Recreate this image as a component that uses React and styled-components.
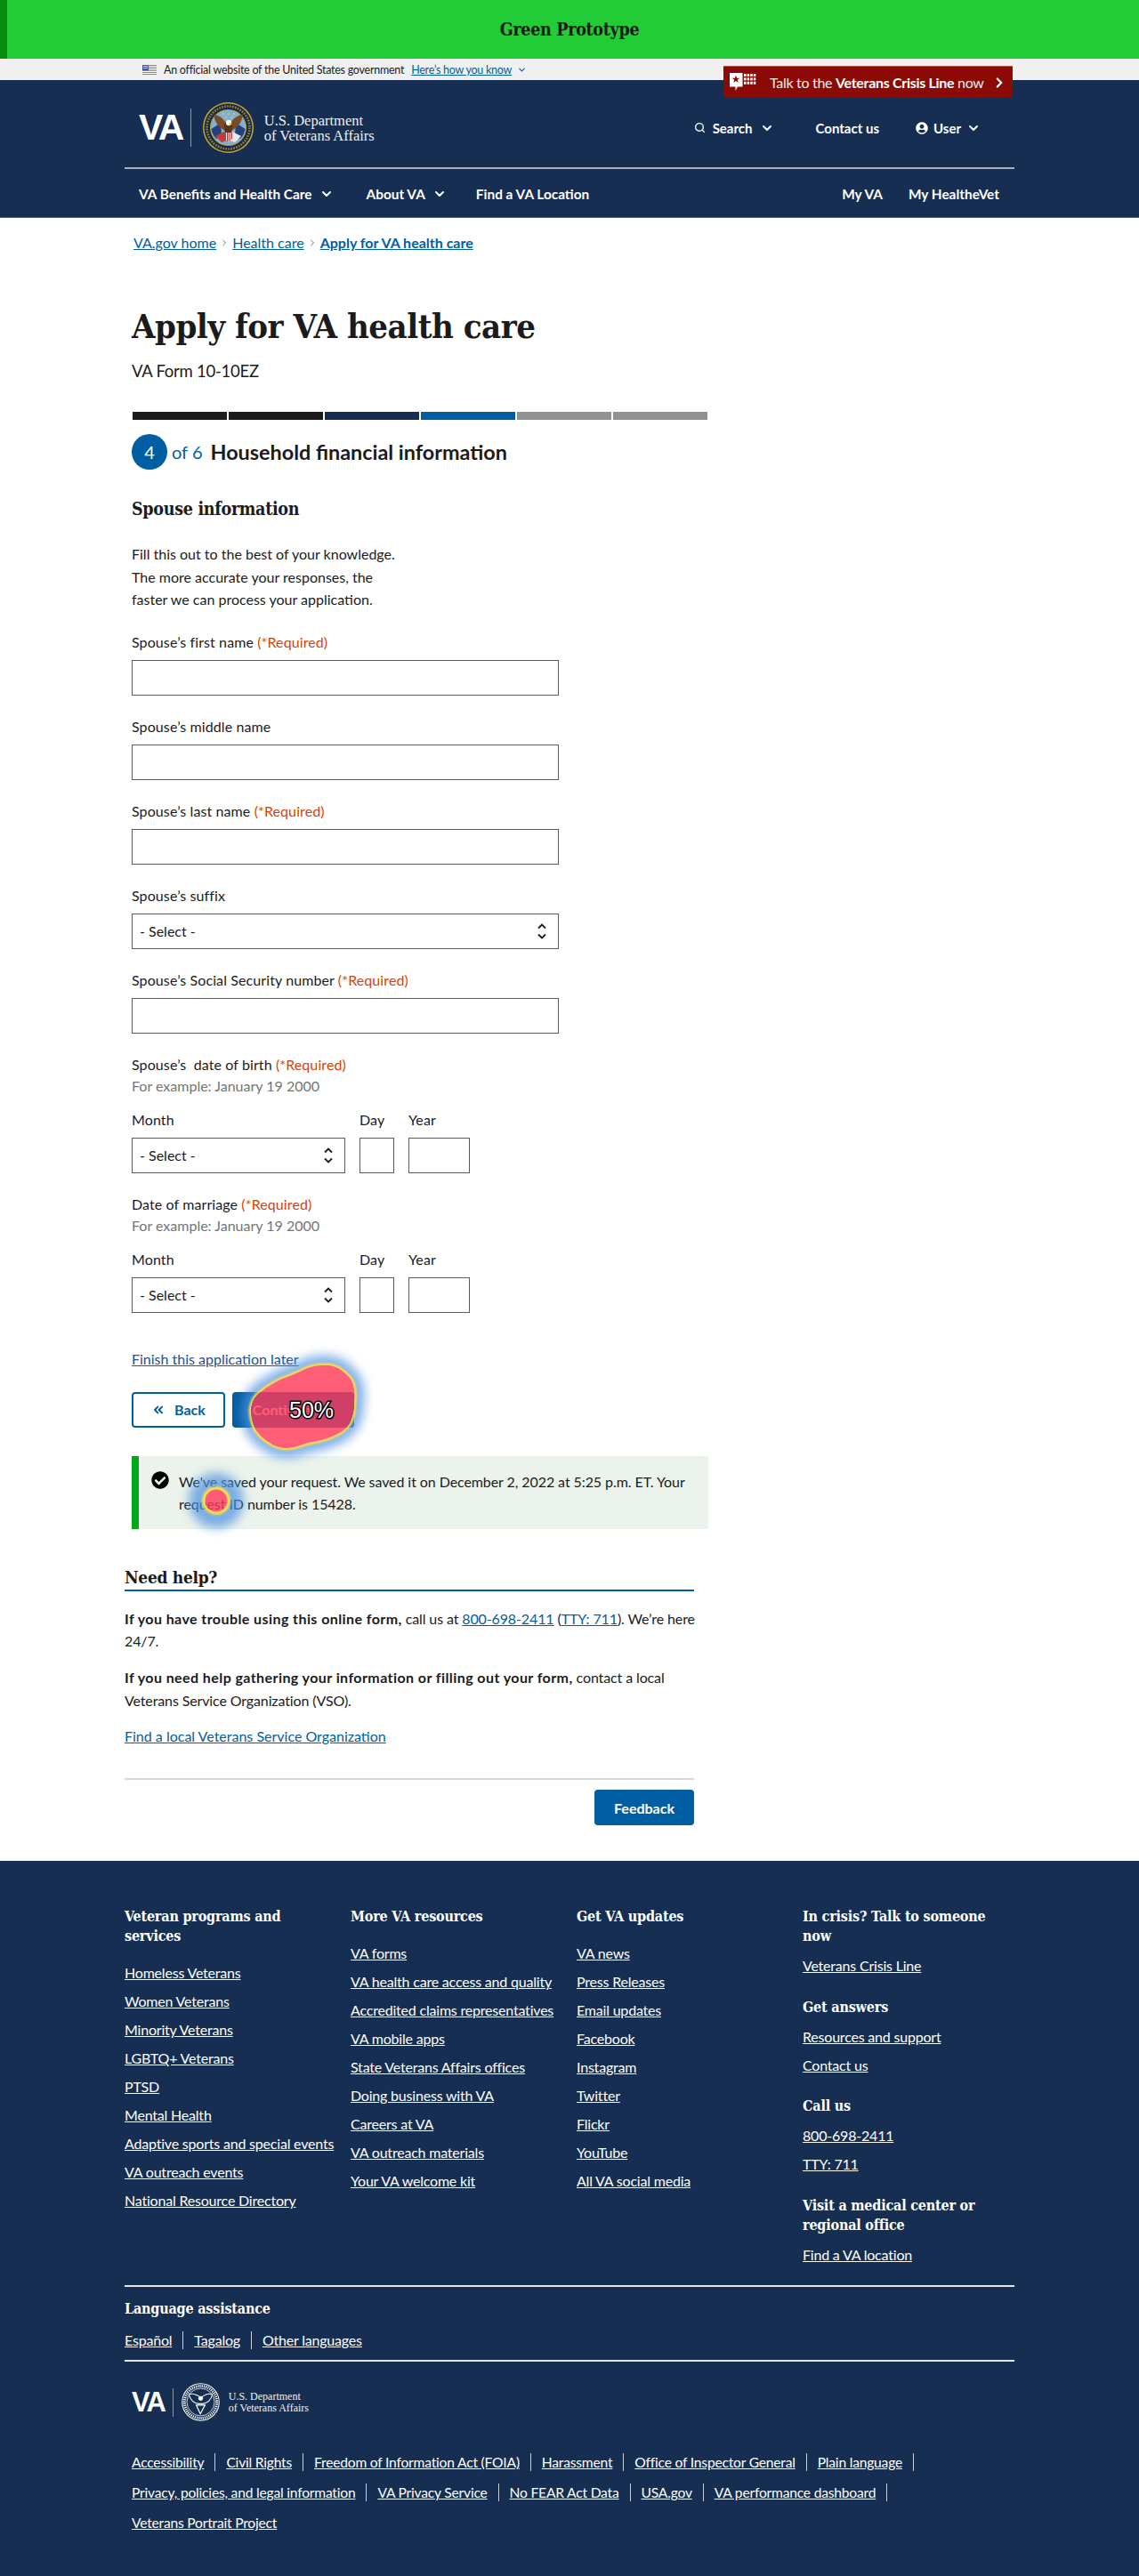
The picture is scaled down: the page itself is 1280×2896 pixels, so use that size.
import React from 'react'
import styled, { createGlobalStyle } from 'styled-components'
import { ChevronDown, ChevronRight, ChevronsLeft, ChevronsRight, Search } from 'lucide-react'
import { FaUserCircle, FaCheckCircle } from 'react-icons/fa'

const SANS = `'Lato', 'Noto Sans', sans-serif`
const SERIF = `'DejaVu Serif Condensed', 'DejaVu Serif', serif`
const NAVY = '#162e51'
const BLUE = '#005ea2'

const GlobalStyle = createGlobalStyle`
  * { box-sizing: border-box; }
  body {
    margin: 0;
    background: #fff;
    color: #1b1b1b;
    font-family: ${SANS};
    font-size: 16px;
  }
`

const Page = styled.div`
  position: relative;
  width: 1280px;
  min-height: 2896px;
  overflow: hidden;
`

// prototype banner
const PrototypeBar = styled.div`
  height: 66px;
  background: #22cc36;
  border-left: 8px solid #0a8a0f;
  padding-right: 8px;
  display: flex;
  align-items: center;
  justify-content: center;
  font-family: ${SERIF};
  font-weight: 700;
  font-size: 19.5px;
  letter-spacing: -0.3px;
  color: #1b1b1b;
`

const GovBanner = styled.div`
  height: 24px;
  background: #f0f0f0;
  padding-left: 160px;
  display: flex;
  align-items: center;
  font-size: 12.5px;
  letter-spacing: -0.25px;
  color: #1b1b1b;
`

const GovText = styled.span`
  margin: 0 8px;
`

const GovLink = styled.a`
  color: ${BLUE};
  text-decoration: underline;
  margin-right: 6px;
`

// header
const Header = styled.header`
  background: ${NAVY};
  height: 155px;
  border-bottom: 1px solid #4a5a78;
`

const HeaderInner = styled.div`
  width: 1000px;
  margin: 0 auto;
`

const TopRow = styled.div`
  height: 98px;
  padding: 25px 0 0 16px;
  display: flex;
  justify-content: space-between;
`

const LogoWrap = styled.div`
  display: flex;
  align-items: center;
  height: 57px;
  color: #fff;
`

const VaMark = styled.span`
  font-family: 'Liberation Sans', Arial, sans-serif;
  font-weight: 700;
  font-size: ${({ $small }) => ($small ? '31px' : '41px')};
  letter-spacing: ${({ $small }) => ($small ? '-2px' : '-2.6px')};
  color: #fff;
`

const LogoDivider = styled.span`
  width: 1px;
  height: ${({ $small }) => ($small ? '32px' : '43px')};
  background: #8a97ac;
  margin: ${({ $small }) => ($small ? '0 9px 0 9px' : '0 13px 0 9px')};
`

const DeptName = styled.span`
  font-family: 'Liberation Serif', serif;
  font-size: ${({ $small }) => ($small ? '12px' : '16.5px')};
  line-height: ${({ $small }) => ($small ? '13px' : '17px')};
  margin-left: ${({ $small }) => ($small ? '10px' : '12px')};
  color: #f0f0f0;
`

const UtilityNav = styled.div`
  display: flex;
  align-items: center;
  height: 57px;
  padding-right: 38px;
  color: #fff;
  font-weight: 700;
  font-size: 15px;
`

const UtilityItem = styled.span`
  display: flex;
  align-items: center;
  gap: ${({ $gap }) => $gap || 8}px;
  margin-left: ${({ $left }) => $left || 0}px;
`

const Rule = styled.div`
  height: 2px;
  background: #aeb0b5;
`

const MainNav = styled.nav`
  height: 55px;
  padding: 0 17px 0 16px;
  display: flex;
  align-items: center;
  color: #fff;
  font-weight: 700;
  font-size: 15.4px;
`

const NavItem = styled.span`
  display: flex;
  align-items: center;
  gap: 8px;
  margin-right: ${({ $right }) => $right || 0}px;
`

const NavSpacer = styled.span`
  flex: 1;
`

const CrisisButton = styled.a`
  position: absolute;
  left: 813px;
  top: 74px;
  width: 325px;
  height: 36px;
  background: #8b0a03;
  border-top: 1px solid #c0504a;
  border-radius: 0 0 3px 3px;
  padding: 0 6px 0 7px;
  display: flex;
  align-items: center;
  color: #fff;
  font-size: 16px;
`

const CrisisText = styled.span`
  margin: 0 auto 0 15px;
  color: #f0f0f0;
  letter-spacing: -0.3px;
  b { color: #fff; }
`

// main form
const Breadcrumbs = styled.nav`
  padding: 16px 0 0 150px;
  display: flex;
  align-items: center;
  line-height: 24px;
  color: #71767a;
`

const Crumb = styled.a`
  color: ${BLUE};
  text-decoration: underline;
  font-weight: ${({ $current }) => ($current ? 700 : 400)};
`

const CrumbArrow = styled(ChevronRight)`
  margin: 0 3px;
`

const FormColumn = styled.main`
  margin-left: 148px;
  width: 648px;
`

const Title = styled.h1`
  margin: 58px 0 0;
  font-family: ${SERIF};
  font-weight: 700;
  font-size: 38px;
  line-height: 48px;
  letter-spacing: -0.5px;
`

const FormNumber = styled.div`
  margin-top: 12px;
  font-size: 18.5px;
  letter-spacing: -0.25px;
  line-height: 28px;
`

const StepBar = styled.div`
  margin: 32px 0 0 1px;
  display: grid;
  grid-template-columns: repeat(6, 106px);
  gap: 2px;
`

const StepSegment = styled.div`
  height: 9px;
  background: ${({ $color }) => $color};
`

const StepRow = styled.div`
  margin-top: 16px;
  height: 40px;
  display: flex;
  align-items: center;
`

const StepCircle = styled.div`
  width: 40px;
  height: 40px;
  border-radius: 50%;
  background: ${BLUE};
  color: #fff;
  font-size: 20px;
  display: flex;
  align-items: center;
  justify-content: center;
`

const StepCount = styled.span`
  margin-left: 5px;
  font-size: 20px;
  color: ${BLUE};
`

const StepTitle = styled.span`
  margin-left: 9px;
  font-size: 23.4px;
  font-weight: 700;
`

const SectionTitle = styled.h2`
  margin: 30px 0 0;
  font-family: ${SERIF};
  font-weight: 700;
  font-size: 19.5px;
  line-height: 30px;
  letter-spacing: -0.3px;
`

const Intro = styled.p`
  margin: 22px 0 0;
  line-height: 25.6px;
`

const Field = styled.div`
  margin-top: 23px;
`

const Label = styled.label`
  display: block;
  line-height: 24px;
  letter-spacing: 0.1px;
  margin-bottom: ${({ $tight }) => ($tight ? 0 : '8px')};
`

const Required = styled.span`
  color: #d54309;
`

const Hint = styled.div`
  color: #757575;
  line-height: 23px;
  margin-bottom: 15px;
`

const TextInput = styled.input`
  display: block;
  width: ${({ $width }) => $width || 480}px;
  height: 40px;
  background: #fff;
  border: 1px solid #5c5c5c;
  border-radius: 0;
  padding: 0 8px;
`

const SelectBox = styled.div`
  width: ${({ $width }) => $width || 480}px;
  height: 40px;
  border: 1px solid #5c5c5c;
  padding: 0 13px 0 8px;
  display: flex;
  align-items: center;
  justify-content: space-between;
`

const DateRow = styled.div`
  display: flex;
  gap: 16px;
`

const FinishLink = styled.a`
  display: block;
  margin-top: 40px;
  line-height: 24px;
  color: #264f8c;
  text-decoration: underline;
`

const ButtonRow = styled.div`
  margin-top: 25px;
  display: flex;
  gap: 8px;
`

const ActionButton = styled.button`
  height: 40px;
  width: ${({ $width }) => $width}px;
  border-radius: 4px;
  font-family: ${SANS};
  font-size: 16px;
  font-weight: 700;
  display: flex;
  align-items: center;
  justify-content: center;
  gap: 10px;
  background: ${({ $outline }) => ($outline ? '#fff' : BLUE)};
  color: ${({ $outline }) => ($outline ? BLUE : '#fff')};
  border: 2px solid ${BLUE};
`

const Alert = styled.div`
  margin-top: 32px;
  height: 82px;
  background: #ecf3ec;
  border-left: 8px solid #00a91c;
  padding: 16px 12px 0 14px;
  display: flex;
  gap: 11px;
  line-height: 25.6px;
  letter-spacing: -0.08px;
`

const AlertIcon = styled(FaCheckCircle)`
  flex: none;
  margin-top: 1px;
  font-size: 20px;
  color: #000;
`

const HelpSection = styled.section`
  margin: 40px 0 0 140px;
  width: 640px;
`

const HelpTitle = styled.h2`
  margin: 0;
  font-family: ${SERIF};
  font-weight: 700;
  font-size: 19px;
  line-height: 28px;
  letter-spacing: -0.3px;
  border-bottom: 2px solid ${BLUE};
`

const HelpText = styled.p`
  margin: ${({ $top }) => $top}px 0 0;
  line-height: 25.6px;
  letter-spacing: -0.12px;
  white-space: nowrap;
  b { letter-spacing: 0.42px; }
`

const Plain = styled.span``

const TextLink = styled.a`
  color: ${BLUE};
  text-decoration: underline;
`

const HelpLink = styled(TextLink)`
  display: block;
  margin-top: 16px;
  line-height: 24px;
`

const HelpRule = styled.div`
  margin-top: 35px;
  height: 2px;
  background: #d6d7d9;
`

const FeedbackRow = styled.div`
  margin-top: 11px;
  display: flex;
  justify-content: flex-end;
`

// footer
const Footer = styled.footer`
  margin-top: 40px;
  background: ${NAVY};
  padding-bottom: 48px;
  color: #fff;
`

const FooterInner = styled.div`
  width: 1000px;
  margin: 0 auto;
  padding-top: 52px;
`

const FooterGrid = styled.div`
  display: grid;
  grid-template-columns: repeat(4, 254px);
`

const FooterHeading = styled.h3`
  margin: ${({ $top }) => $top || 0}px 0 0;
  font-family: ${SERIF};
  font-weight: 700;
  font-size: 16px;
  line-height: 22px;
  letter-spacing: -0.2px;
  color: #fff;
`

const FooterList = styled.div`
  margin-top: ${({ $top }) => $top}px;
  display: flex;
  flex-direction: column;
  align-items: flex-start;
  gap: 8px;
`

const FooterLink = styled.a`
  color: #fff;
  text-decoration: underline;
  line-height: 24px;
  letter-spacing: -0.2px;
  white-space: nowrap;
`

const LegalLink = styled(FooterLink)`
  font-size: 15.6px;
`

const FooterRule = styled.div`
  height: 2px;
  background: #e6e6e6;
  margin-top: ${({ $top }) => $top}px;
`

const LinkRow = styled.div`
  display: flex;
  align-items: center;
  height: 24px;
  margin-top: ${({ $top }) => $top || 0}px;
  padding-left: ${({ $indent }) => $indent || 0}px;
`

const RowItem = styled.span`
  display: flex;
  align-items: center;
  height: 20px;
  padding-right: 12px;
  margin-right: 12px;
  border-right: 1px solid ${({ $last }) => ($last ? 'transparent' : '#c9ced6')};
`

const FooterLogo = styled.div`
  margin: 24px 0 0 8px;
  height: 43px;
  display: flex;
  align-items: center;
`

// heatmap overlay
const HeatLayer = styled.svg`
  position: absolute;
  left: 0;
  top: 0;
  pointer-events: none;
`

const HeatLabel = styled.span`
  position: absolute;
  left: 325px;
  top: 1570px;
  font-family: 'Liberation Sans', Arial, sans-serif;
  font-size: 25px;
  line-height: 30px;
  color: #fff;
  -webkit-text-stroke: 3px #000;
  paint-order: stroke fill;
`

const FlagIcon = () => (
  <svg width="16" height="11" viewBox="0 0 16 11">
    <rect width="16" height="11" fill="#fff" />
    {[0, 2, 4, 6, 8, 10].map(y => (
      <rect key={y} y={y} width="16" height="1" fill="#e8634f" />
    ))}
    <rect width="7" height="6" fill="#4a4fb0" />
    <rect x="1" y="1" width="5" height="1" fill="#c9cdf0" />
    <rect x="1" y="3" width="5" height="1" fill="#c9cdf0" />
  </svg>
)

const UpDownArrows = () => (
  <svg width="10" height="18" viewBox="0 0 10 18" fill="none" stroke="#1b1b1b" strokeWidth="1.8">
    <path d="M1 5.5 L5 1.5 L9 5.5" />
    <path d="M1 12.5 L5 16.5 L9 12.5" />
  </svg>
)

const CrisisIcon = () => (
  <svg width="30" height="21" viewBox="0 0 30 21">
    <path d="M0 0H14.5V15.5H9L6.5 20V15.5H0Z" fill="#fff" />
    <path d="M7 2.8l1.1 3h3.2l-2.6 2 1 3.2L7 9.1l-2.7 1.9 1-3.2-2.6-2h3.2z" fill="#8b0a03" />
    {[0, 1, 2].map(r =>
      [0, 1, 2, 3].map(c => (
        <rect key={`${r}-${c}`} x={16 + c * 3.6} y={1 + r * 4.4} width="2.5" height="3" fill="#fff" />
      ))
    )}
  </svg>
)

// the round VA seal, colour for the header and white line for the footer
const Seal = ({ size, mono }) => (
  <svg width={size} height={size} viewBox="0 0 57 57">
    {mono ? (
      <g fill="none" stroke="#fff">
        <circle cx="28.5" cy="28.5" r="27.5" strokeWidth="1.4" />
        <circle cx="28.5" cy="28.5" r="24" strokeWidth="4" strokeDasharray="1.5 1.5" />
        <circle cx="28.5" cy="28.5" r="20.5" strokeWidth="1" />
        <path d="M28 21 C22 17 16 15 11 17 C13 25 18 30 26 31 L31 31 C39 30 44 25 46 17 C41 15 35 17 30 21Z" strokeWidth="1.4" />
        <path d="M22 33 L28 46 L35 33Z" strokeWidth="1.6" />
        <circle cx="28.5" cy="23" r="3" fill="#fff" />
      </g>
    ) : (
      <g>
        <circle cx="28.5" cy="28.5" r="28.5" fill="#c9a227" />
        <circle cx="28.5" cy="28.5" r="27" fill="#142a4d" />
        <circle cx="28.5" cy="28.5" r="24" fill="none" stroke="#c9a227" strokeWidth="2.6" strokeDasharray="1.6 1.4" opacity="0.75" />
        <circle cx="28.5" cy="28.5" r="20.5" fill="#c9a227" />
        <circle cx="28.5" cy="28.5" r="19.5" fill="#7fb0d6" />
        <path d="M9.5 30 L20 23 L21 38 L15 41 C12 38 10 34 9.5 30Z" fill="#27407a" />
        <path d="M47.5 30 L37 23 L36 38 L42 41 C45 38 47 34 47.5 30Z" fill="#27407a" />
        <path d="M14 38 L24 33 L27 43 L21 45Z" fill="#c23a3a" />
        <path d="M43 38 L33 33 L30 43 L36 45Z" fill="#e8e8e8" />
        <path d="M27 25 C23 18 18 14 12 14 C13 21 17 28 25 32Z" fill="#7a4a22" />
        <path d="M30 25 C34 18 39 14 45 14 C44 21 40 28 32 32Z" fill="#7a4a22" />
        <path d="M24 27 C24 23 26 21 29 21 C32 21 34 23 33 27 L32 36 L25 36Z" fill="#5a3418" />
        <circle cx="29" cy="23" r="3.2" fill="#f5f5f5" />
        <path d="M30 23 L33.5 24.5 L30 25.5Z" fill="#e0b030" />
        <path d="M24.5 34 H33 V41 L28.7 45 L24.5 41Z" fill="#c23a3a" />
        <path d="M26.5 34 V43 M29 34 V45 M31.2 34 V43" stroke="#fff" strokeWidth="0.9" />
        <g fill="#e5c340">
          <circle cx="23" cy="13" r="1" />
          <circle cx="29" cy="13" r="1" />
          <circle cx="35" cy="13" r="1" />
          <circle cx="26" cy="17" r="1" />
          <circle cx="32" cy="17" r="1" />
        </g>
      </g>
    )}
  </svg>
)

const BLOB = 'M282 1585 C283 1575 287 1569 293 1565 C301 1558 309 1554 317 1550 C325 1547 331 1545 337 1542 C345 1538 352 1535 360 1535 C370 1534 378 1536 383 1540 C391 1546 396 1551 397 1557 C399 1564 399 1571 398 1577 C398 1586 396 1594 393 1600 C388 1608 381 1612 373 1615 C365 1619 356 1620 347 1622 C339 1624 331 1628 323 1628 C315 1628 309 1626 303 1622 C296 1618 291 1613 287 1607 C284 1600 282 1593 282 1585Z'

// blue and yellow are kept outside the red core so the page shows through it
const Heatmap = () => (
  <HeatLayer width="1280" height="2896" viewBox="0 0 1280 2896">
    <defs>
      <filter id="soft" x="-50%" y="-50%" width="200%" height="200%">
        <feGaussianBlur stdDeviation="6" />
      </filter>
      <filter id="softer" x="-50%" y="-50%" width="200%" height="200%">
        <feGaussianBlur stdDeviation="1.2" />
      </filter>
      <mask id="outside" maskUnits="userSpaceOnUse" x="0" y="0" width="1280" height="2896">
        <rect width="1280" height="2896" fill="#fff" />
        <path d={BLOB} fill="#000" />
        <circle cx="243" cy="1687" r="12.5" fill="#000" />
      </mask>
    </defs>
    <g mask="url(#outside)">
      <g filter="url(#soft)" opacity="0.72">
        <path d={BLOB} fill="#4f92e0" stroke="#4f92e0" strokeWidth="22" />
        <circle cx="243" cy="1687" r="31" fill="#4f92e0" />
      </g>
      <g filter="url(#softer)">
        <path d={BLOB} fill="#f7de4a" stroke="#f7de4a" strokeWidth="5" />
        <circle cx="243" cy="1687" r="16" fill="#f7de4a" />
      </g>
    </g>
    <g fill="rgb(255,57,88)" fillOpacity="0.81">
      <path d={BLOB} />
      <circle cx="243" cy="1687" r="12.5" />
    </g>
  </HeatLayer>
)

const footerColumns = [
  {
    heading: <>Veteran programs and<br />services</>,
    links: ['Homeless Veterans', 'Women Veterans', 'Minority Veterans', 'LGBTQ+ Veterans', 'PTSD', 'Mental Health', 'Adaptive sports and special events', 'VA outreach events', 'National Resource Directory'],
  },
  {
    heading: 'More VA resources',
    links: ['VA forms', 'VA health care access and quality', 'Accredited claims representatives', 'VA mobile apps', 'State Veterans Affairs offices', 'Doing business with VA', 'Careers at VA', 'VA outreach materials', 'Your VA welcome kit'],
  },
  {
    heading: 'Get VA updates',
    links: ['VA news', 'Press Releases', 'Email updates', 'Facebook', 'Instagram', 'Twitter', 'Flickr', 'YouTube', 'All VA social media'],
  },
]

const contactGroups = [
  { heading: <>In crisis? Talk to someone<br />now</>, links: ['Veterans Crisis Line'], top: 0 },
  { heading: 'Get answers', links: ['Resources and support', 'Contact us'], top: 24 },
  { heading: 'Call us', links: ['800-698-2411', 'TTY: 711'], top: 23 },
  { heading: <>Visit a medical center or<br />regional office</>, links: ['Find a VA location'], top: 24 },
]

const legalRows = [
  ['Accessibility', 'Civil Rights', 'Freedom of Information Act (FOIA)', 'Harassment', 'Office of Inspector General', 'Plain language'],
  ['Privacy, policies, and legal information', 'VA Privacy Service', 'No FEAR Act Data', 'USA.gov', 'VA performance dashboard'],
]

const DateField = ({ label }) => (
  <Field>
    <Label $tight>{label} <Required>(*Required)</Required></Label>
    <Hint>For example: January 19 2000</Hint>
    <DateRow>
      <div>
        <Label>Month</Label>
        <SelectBox $width={240}>- Select - <UpDownArrows /></SelectBox>
      </div>
      <div>
        <Label>Day</Label>
        <TextInput $width={39} />
      </div>
      <div>
        <Label>Year</Label>
        <TextInput $width={69} />
      </div>
    </DateRow>
  </Field>
)

const TextField = ({ label, required }) => (
  <Field>
    <Label>{label} {required && <Required>(*Required)</Required>}</Label>
    <TextInput />
  </Field>
)

const App = () => (
  <Page>
    <GlobalStyle />
    <PrototypeBar>Green Prototype</PrototypeBar>
    <GovBanner>
      <FlagIcon />
      <GovText>An official website of the United States government</GovText>
      <GovLink>Here’s how you know</GovLink>
      <ChevronDown size={11} color={BLUE} strokeWidth={2.5} />
    </GovBanner>
    <CrisisButton>
      <CrisisIcon />
      <CrisisText>Talk to the <b>Veterans Crisis Line</b> now</CrisisText>
      <ChevronRight size={18} strokeWidth={3} />
    </CrisisButton>
    <Header>
      <HeaderInner>
        <TopRow>
          <LogoWrap>
            <VaMark>VA</VaMark>
            <LogoDivider />
            <Seal size={57} />
            <DeptName>U.S. Department<br />of Veterans Affairs</DeptName>
          </LogoWrap>
          <UtilityNav>
            <UtilityItem><Search size={13} strokeWidth={2.5} /> Search <ChevronDown size={16} strokeWidth={3} /></UtilityItem>
            <UtilityItem $left={47}>Contact us</UtilityItem>
            <UtilityItem $left={41} $gap={6}><FaUserCircle size={14} /> User <ChevronDown size={16} strokeWidth={3} /></UtilityItem>
          </UtilityNav>
        </TopRow>
        <Rule />
        <MainNav>
          <NavItem $right={37}>VA Benefits and Health Care <ChevronDown size={16} strokeWidth={3} /></NavItem>
          <NavItem $right={33}>About VA <ChevronDown size={16} strokeWidth={3} /></NavItem>
          <NavItem>Find a VA Location</NavItem>
          <NavSpacer />
          <NavItem $right={29}>My VA</NavItem>
          <NavItem>My HealtheVet</NavItem>
        </MainNav>
      </HeaderInner>
    </Header>

    <Breadcrumbs>
      <Crumb>VA.gov home</Crumb>
      <CrumbArrow size={12} />
      <Crumb>Health care</Crumb>
      <CrumbArrow size={12} />
      <Crumb $current>Apply for VA health care</Crumb>
    </Breadcrumbs>

    <FormColumn>
      <Title>Apply for VA health care</Title>
      <FormNumber>VA Form 10-10EZ</FormNumber>
      <StepBar>
        {['#1b1b1b', '#1b1b1b', NAVY, BLUE, '#919191', '#919191'].map((c, i) => (
          <StepSegment key={i} $color={c} />
        ))}
      </StepBar>
      <StepRow>
        <StepCircle>4</StepCircle>
        <StepCount>of 6</StepCount>
        <StepTitle>Household financial information</StepTitle>
      </StepRow>
      <SectionTitle>Spouse information</SectionTitle>
      <Intro>
        Fill this out to the best of your knowledge.<br />
        The more accurate your responses, the<br />
        faster we can process your application.
      </Intro>
      <TextField label="Spouse’s first name" required />
      <TextField label="Spouse’s middle name" />
      <TextField label="Spouse’s last name" required />
      <Field>
        <Label>Spouse’s suffix</Label>
        <SelectBox>- Select - <UpDownArrows /></SelectBox>
      </Field>
      <TextField label="Spouse’s Social Security number" required />
      <DateField label={'Spouse’s\u00a0 date of birth'} />
      <DateField label="Date of marriage" />
      <FinishLink>Finish this application later</FinishLink>
      <ButtonRow>
        <ActionButton $outline $width={105}><ChevronsLeft size={16} strokeWidth={3} /> Back</ActionButton>
        <ActionButton $width={137}>Continue <ChevronsRight size={16} strokeWidth={3} /></ActionButton>
      </ButtonRow>
      <Alert>
        <AlertIcon />
        <span>We've saved your request. We saved it on December 2, 2022 at 5:25 p.m. ET. Your request ID number is 15428.</span>
      </Alert>
    </FormColumn>

    <HelpSection>
      <HelpTitle>Need help?</HelpTitle>
      <HelpText $top={18}>
        <b>If you have trouble using this online form,</b>
        <Plain> call us at </Plain>
        <TextLink>800-698-2411</TextLink>
        <Plain> (</Plain>
        <TextLink>TTY: 711</TextLink>
        <Plain>). We’re here<br />24/7.</Plain>
      </HelpText>
      <HelpText $top={15}>
        <b>If you need help gathering your information or filling out your form,</b>
        <Plain> contact a local<br />Veterans Service Organization (VSO).</Plain>
      </HelpText>
      <HelpLink>Find a local Veterans Service Organization</HelpLink>
      <HelpRule />
      <FeedbackRow>
        <ActionButton $width={112}>Feedback</ActionButton>
      </FeedbackRow>
    </HelpSection>

    <Footer>
      <FooterInner>
        <FooterGrid>
          {footerColumns.map((col, i) => (
            <div key={i}>
              <FooterHeading>{col.heading}</FooterHeading>
              <FooterList $top={18}>
                {col.links.map(l => <FooterLink key={l}>{l}</FooterLink>)}
              </FooterList>
            </div>
          ))}
          <div>
            {contactGroups.map((g, i) => (
              <div key={i}>
                <FooterHeading $top={g.top}>{g.heading}</FooterHeading>
                <FooterList $top={10}>
                  {g.links.map(l => <FooterLink key={l}>{l}</FooterLink>)}
                </FooterList>
              </div>
            ))}
          </div>
        </FooterGrid>
        <FooterRule $top={22} />
        <FooterHeading $top={14}>Language assistance</FooterHeading>
        <LinkRow $top={12}>
          <RowItem><FooterLink>Español</FooterLink></RowItem>
          <RowItem><FooterLink>Tagalog</FooterLink></RowItem>
          <RowItem $last><FooterLink>Other languages</FooterLink></RowItem>
        </LinkRow>
        <FooterRule $top={10} />
        <FooterLogo>
          <VaMark $small>VA</VaMark>
          <LogoDivider $small />
          <Seal size={43} mono />
          <DeptName $small>U.S. Department<br />of Veterans Affairs</DeptName>
        </FooterLogo>
        {legalRows.map((row, i) => (
          <LinkRow key={i} $indent={8} $top={i === 0 ? 34 : 10}>
            {row.map(l => <RowItem key={l}><LegalLink>{l}</LegalLink></RowItem>)}
          </LinkRow>
        ))}
        <LinkRow $indent={8} $top={10}>
          <LegalLink>Veterans Portrait Project</LegalLink>
        </LinkRow>
      </FooterInner>
    </Footer>

    <Heatmap />
    <HeatLabel>50%</HeatLabel>
  </Page>
)

export default App
